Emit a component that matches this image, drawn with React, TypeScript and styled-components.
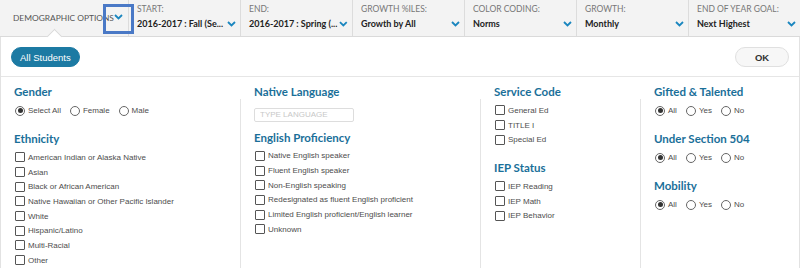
import React from "react";
import styled, { createGlobalStyle } from "styled-components";

const GlobalStyle = createGlobalStyle`
  html, body { margin: 0; padding: 0; background: #fff; }
  body { font-family: "Liberation Sans", Arial, sans-serif; }
  * { box-sizing: border-box; }
`;

const Page = styled.div`
  width: 800px;
  height: 268px;
  overflow: hidden;
  background: #fff;
`;

const TopBar = styled.div`
  display: flex;
  height: 37px;
  background: #f3f3f3;
  border-bottom: 1px solid #dadada;
`;

const DemoTab = styled.div`
  position: relative;
  width: 128px;
  flex: none;
  display: flex;
  align-items: center;
  padding-left: 13px;
  font-family: Lato, "Open Sans", sans-serif;
  font-size: 8.4px;
  color: #555;
`;

const Notch = styled.span`
  position: absolute;
  left: 49px;
  bottom: -6px;
  width: 11px;
  height: 11px;
  background: #fff;
  border-left: 1px solid #dadada;
  border-top: 1px solid #dadada;
  transform: rotate(45deg);
`;

const Highlight = styled.span`
  position: absolute;
  left: 103px;
  top: 4px;
  width: 31px;
  height: 30px;
  border: 3px solid #4a79c6;
`;

const DemoChevron = styled.span`
  position: absolute;
  left: 114px;
  top: 14px;
  display: flex;
`;

const FilterSection = styled.div`
  width: 112px;
  flex: none;
  border-left: 1px solid #dcdcdc;
  padding: 4px 4px 0 8px;
  font-family: Lato, "Open Sans", sans-serif;
`;

const FilterLabel = styled.div`
  font-size: 8.5px;
  line-height: 11px;
  color: #777;
  text-transform: uppercase;
`;

const FilterValueRow = styled.div`
  display: flex;
  align-items: center;
  justify-content: space-between;
  margin-top: 2px;
  gap: 2px;
`;

const FilterValue = styled.span`
  font-size: 9px;
  line-height: 13px;
  font-weight: 700;
  color: #222;
  white-space: nowrap;
`;

const Chevron = () => (
  <svg width="9" height="6" viewBox="0 0 9 6">
    <path d="M1 1 L4.5 4.5 L8 1" fill="none" stroke="#1a86bf" strokeWidth="1.8" />
  </svg>
);

const Panel = styled.div`
  border-left: 1px solid #e2e2e2;
  border-right: 1px solid #e2e2e2;
  height: 231px;
`;

const ButtonRow = styled.div`
  display: flex;
  justify-content: space-between;
  align-items: center;
  padding: 10px 10px 9px 10px;
  border-bottom: 1px solid #e6e6e6;
`;

const PillButton = styled.button<{ $primary?: boolean }>`
  height: 20px;
  border-radius: 10px;
  padding: 0 ${(p) => (p.$primary ? "8px" : "18px")};
  font-family: "Liberation Sans", Arial, sans-serif;
  font-size: 9.5px;
  font-weight: ${(p) => (p.$primary ? 400 : 700)};
  background: ${(p) => (p.$primary ? "#1c7aa3" : "#f7f7f7")};
  color: ${(p) => (p.$primary ? "#fff" : "#333")};
  border: 1px solid ${(p) => (p.$primary ? "#1c7aa3" : "#e0e0e0")};
  min-width: ${(p) => (p.$primary ? "auto" : "54px")};
`;

const Columns = styled.div`
  display: grid;
  grid-template-columns: 240px 240px 160px 160px;
`;

const Column = styled.div<{ $first?: boolean }>`
  position: relative;
  padding: 7px 0 0 13px;
  &::before {
    content: "";
    display: ${(p) => (p.$first ? "none" : "block")};
    position: absolute;
    left: -1px;
    top: 22px;
    bottom: -20px;
    width: 1px;
    background: #e4e4e4;
  }
`;

const Group = styled.div`
  margin-bottom: 13px;
`;

const Heading = styled.div`
  font-family: Lato, "Open Sans", sans-serif;
  font-weight: 700;
  font-size: 11.5px;
  line-height: 16px;
  color: #1a6f99;
  margin-bottom: 3px;
`;

const RadioRow = styled.div`
  display: flex;
  align-items: center;
  height: 15px;
  gap: 8px;
`;

const Option = styled.label`
  display: flex;
  align-items: center;
  gap: 3px;
  font-size: 8px;
  color: #4d4d4d;
  height: 14.7px;
  white-space: nowrap;
`;

const RadioCircle = styled.span<{ $checked?: boolean }>`
  width: 10px;
  height: 10px;
  border-radius: 50%;
  border: 1px solid #666;
  display: inline-flex;
  align-items: center;
  justify-content: center;
  margin-left: 1px;
  &::after {
    content: "";
    width: 5px;
    height: 5px;
    border-radius: 50%;
    background: ${(p) => (p.$checked ? "#333" : "transparent")};
  }
`;

const CheckBox = styled.span`
  width: 10px;
  height: 10px;
  border: 1px solid #555;
  border-radius: 1px;
  margin-left: 1px;
  background: #fff;
`;

const TextInput = styled.input`
  width: 100px;
  height: 14px;
  margin: 3px 0 8px 0;
  border: 1px solid #ddd;
  border-radius: 2px;
  padding: 0 5px;
  font-family: "Liberation Sans", Arial, sans-serif;
  font-size: 8px;
  &::placeholder { color: #c8c8c8; }
`;

const filters = [
  { label: "Start:", value: "2016-2017 : Fall (Se..." },
  { label: "End:", value: "2016-2017 : Spring (..." },
  { label: "Growth %iles:", value: "Growth by All" },
  { label: "Color Coding:", value: "Norms" },
  { label: "Growth:", value: "Monthly" },
  { label: "End of Year Goal:", value: "Next Highest" },
];

const Radios = ({ items }: { items: string[] }) => (
  <RadioRow>
    {items.map((it, i) => (
      <Option key={it}>
        <RadioCircle $checked={i === 0} />
        {it}
      </Option>
    ))}
  </RadioRow>
);

const Checks = ({ items }: { items: string[] }) => (
  <div>
    {items.map((it) => (
      <Option key={it}>
        <CheckBox />
        {it}
      </Option>
    ))}
  </div>
);

export default function App() {
  return (
    <Page>
      <GlobalStyle />
      <TopBar>
        <DemoTab>
          DEMOGRAPHIC OPTIONS
          <DemoChevron>
            <Chevron />
          </DemoChevron>
          <Highlight />
          <Notch />
        </DemoTab>
        {filters.map((f) => (
          <FilterSection key={f.label}>
            <FilterLabel>{f.label}</FilterLabel>
            <FilterValueRow>
              <FilterValue>{f.value}</FilterValue>
              <Chevron />
            </FilterValueRow>
          </FilterSection>
        ))}
      </TopBar>
      <Panel>
        <ButtonRow>
          <PillButton $primary>All Students</PillButton>
          <PillButton>OK</PillButton>
        </ButtonRow>
        <Columns>
          <Column $first>
            <Group>
              <Heading>Gender</Heading>
              <Radios items={["Select All", "Female", "Male"]} />
            </Group>
            <Group>
              <Heading>Ethnicity</Heading>
              <Checks
                items={[
                  "American Indian or Alaska Native",
                  "Asian",
                  "Black or African American",
                  "Native Hawaiian or Other Pacific Islander",
                  "White",
                  "Hispanic/Latino",
                  "Multi-Racial",
                  "Other",
                ]}
              />
            </Group>
          </Column>
          <Column>
            <Heading>Native Language</Heading>
            <TextInput placeholder="TYPE LANGUAGE" />
            <Group>
              <Heading>English Proficiency</Heading>
              <Checks
                items={[
                  "Native English speaker",
                  "Fluent English speaker",
                  "Non-English speaking",
                  "Redesignated as fluent English proficient",
                  "Limited English proficient/English learner",
                  "Unknown",
                ]}
              />
            </Group>
          </Column>
          <Column>
            <Group>
              <Heading>Service Code</Heading>
              <Checks items={["General Ed", "TITLE I", "Special Ed"]} />
            </Group>
            <Group>
              <Heading>IEP Status</Heading>
              <Checks items={["IEP Reading", "IEP Math", "IEP Behavior"]} />
            </Group>
          </Column>
          <Column>
            <Group>
              <Heading>Gifted &amp; Talented</Heading>
              <Radios items={["All", "Yes", "No"]} />
            </Group>
            <Group>
              <Heading>Under Section 504</Heading>
              <Radios items={["All", "Yes", "No"]} />
            </Group>
            <Group>
              <Heading>Mobility</Heading>
              <Radios items={["All", "Yes", "No"]} />
            </Group>
          </Column>
        </Columns>
      </Panel>
    </Page>
  );
}
